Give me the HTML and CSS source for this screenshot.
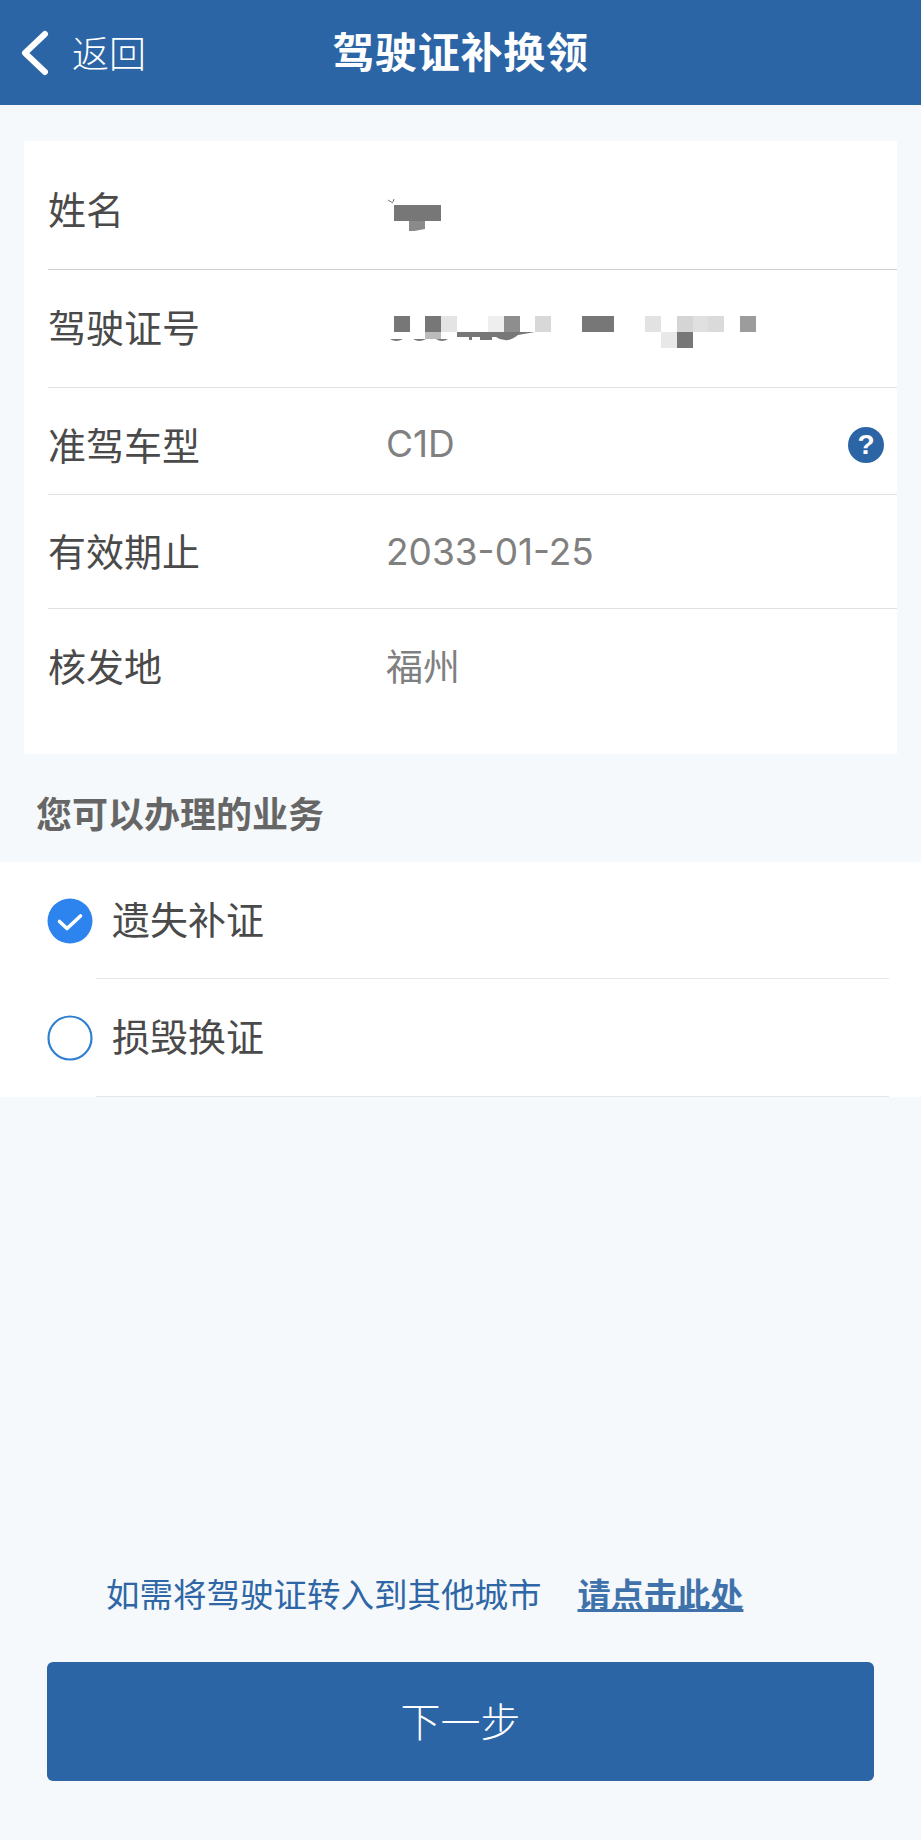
FILE: index.html
```html
<!DOCTYPE html>
<html lang="zh-CN">
<head>
<meta charset="utf-8">
<title>驾驶证补换领</title>
<link rel="stylesheet" href="styles.css">
</head>
<body>

<!-- top bar -->
<div class="topBar">
    <div class="backLink">
        <svg class="backIcon" width="30" height="46" viewBox="0 0 30 46">
            <path d="M25 4 L5 23 L25 42" fill="none" stroke="#fff" stroke-width="6" stroke-linecap="round" stroke-linejoin="round"/>
        </svg>
        <span class="backText">返回</span>
    </div>
    <div class="pageTitle">驾驶证补换领</div>
</div>

<!-- licence details -->
<div class="infoCard">
    <div class="infoRow rowName">
        <div class="infoLabel">姓名</div>
        <svg class="mosaic mosaicName" width="70" height="40" viewBox="386 191 70 40">
            <rect x="394" y="205" width="47" height="16" fill="#777"/>
            <path d="M409 221 H425 V229 L409 232 Z" fill="#8a8a8a"/>
            <path d="M388 200 L393 203 M393 202 L394 199" stroke="#777" stroke-width="1" fill="none"/>
        </svg>
    </div>
    <div class="infoRow rowNumber">
        <div class="infoLabel">驾驶证号</div>
        <svg class="mosaic mosaicNumber" width="390" height="40" viewBox="386 309 390 40">
            <rect x="394" y="315" width="16" height="16" fill="#777"/>
            <rect x="425" y="315" width="16" height="16" fill="#777"/>
            <rect x="441" y="315" width="16" height="16" fill="#e4e4e4"/>
            <rect x="488" y="315" width="16" height="16" fill="#eee"/>
            <rect x="504" y="315" width="16" height="16" fill="#8e8e8e"/>
            <rect x="535" y="315" width="16" height="16" fill="#d8d8d8"/>
            <rect x="582" y="315" width="32" height="16" fill="#777"/>
            <rect x="645" y="315" width="16" height="16" fill="#e2e2e2"/>
            <rect x="677" y="315" width="16" height="16" fill="#d5d5d5"/>
            <rect x="693" y="315" width="15" height="16" fill="#e0e0e0"/>
            <rect x="708" y="315" width="16" height="16" fill="#dadada"/>
            <rect x="740" y="315" width="16" height="16" fill="#9c9c9c"/>
            <rect x="661" y="331" width="16" height="16" fill="#e8e8e8"/>
            <rect x="677" y="331" width="16" height="16" fill="#777"/>
            <rect x="425" y="331" width="16" height="7" fill="#bbb"/>
            <path d="M457 331 H535 L518 334 Q510 340 505 339 Q500 339 496 336 H492 V339 H480 V336 H472 V339 H469 V336 H457 Z" fill="#777"/>
            <path d="M390 338 Q396 342 403 338 Z M413 338 Q419 342 426 338 Z M436 338 Q442 342 448 338 Z" fill="#777"/>
        </svg>
    </div>
    <div class="infoRow rowType">
        <div class="infoLabel">准驾车型</div>
        <div class="infoValue">C1D</div>
        <div class="helpIcon">?</div>
    </div>
    <div class="infoRow rowDate">
        <div class="infoLabel">有效期止</div>
        <div class="infoValue dateValue">2033-01-25</div>
    </div>
    <div class="infoRow rowPlace">
        <div class="infoLabel">核发地</div>
        <div class="infoValue placeValue">福州</div>
    </div>
</div>

<div class="sectionTitle">您可以办理的业务</div>

<!-- business options -->
<div class="optionList">
    <div class="optionRow">
        <svg class="optionIcon" width="46" height="46" viewBox="0 0 46 46">
            <circle cx="23" cy="23" r="22.5" fill="#2d84ee"/>
            <path d="M12.5 23.5 L20 30.5 L33.5 18" fill="none" stroke="#fff" stroke-width="3.6" stroke-linecap="round" stroke-linejoin="round"/>
        </svg>
        <div class="optionText">遗失补证</div>
    </div>
    <div class="optionRow lastOption">
        <svg class="optionIcon" width="46" height="46" viewBox="0 0 46 46">
            <circle cx="23" cy="23" r="21.5" fill="#fff" stroke="#2f80d0" stroke-width="2.2"/>
        </svg>
        <div class="optionText">损毁换证</div>
    </div>
</div>

<div class="bottomArea">
    <div class="transferLine">
        <span class="transferText">如需将驾驶证转入到其他城市</span>
        <span class="transferLink">请点击此处</span>
    </div>
    <div class="nextButton">下一步</div>
</div>

</body>
</html>
```

FILE: styles.css
```css
/* page */
html, body
{
    margin: 0;
    padding: 0;
}

body
{
    width: 921px;
    height: 1840px;
    overflow: hidden;
    display: flex;
    flex-direction: column;
    background-color: #f5f9fb;
    font-family: "Noto Sans CJK SC", "Noto Sans", sans-serif;
}

/* top bar */
.topBar
{
    height: 105px;
    flex: none;
    display: grid;
    grid-template-columns: 1fr auto 1fr;
    align-items: center;
    background-color: #2c65a6;
    color: #fff;
}

.backLink
{
    display: flex;
    align-items: center;
    padding-left: 20px;
}

.backText
{
    margin: 0 0 2px 22px;
    font-size: 37px;
    line-height: 46px;
    font-weight: 300;
}

.pageTitle
{
    margin-bottom: 6px;
    font-size: 42px;
    line-height: 50px;
    font-weight: 700;
    letter-spacing: 0.7px;
}

/* licence card */
.infoCard
{
    flex: none;
    height: 613px;
    margin: 36px 24px 0;
    background-color: #fff;
}

.infoRow
{
    display: flex;
    align-items: flex-start;
    margin-left: 24px;
    box-sizing: border-box;
    border-bottom: 1px solid #dfe1e3;
}

.rowName   { height: 129px; padding-top: 47px; border-bottom-color: #cfd1d3; }
.rowNumber { height: 118px; padding-top: 36px; }
.rowType   { height: 107px; padding-top: 36px; }
.rowDate   { height: 114px; padding-top: 35px; }
.rowPlace  { height: 145px; padding-top: 36px; border-bottom: 0; }

.infoLabel
{
    width: 338px;
    flex: none;
    font-size: 38px;
    line-height: 40px;
    color: #4a4a4a;
}

.infoValue
{
    flex: 1;
    font-family: Inter, "Noto Sans CJK SC", sans-serif;
    font-size: 37px;
    line-height: 40px;
    color: #808080;
}

.dateValue
{
    margin-top: 2px;
}

.placeValue
{
    margin-top: 3px;
}

.mosaic
{
    display: block;
    flex: none;
}

.mosaicName
{
    margin-top: 3px;
}

.mosaicNumber
{
    margin-top: 4px;
}

.helpIcon
{
    width: 36px;
    height: 36px;
    flex: none;
    margin: 3px 13px 0 0;
    border-radius: 50%;
    background-color: #2c65a6;
    color: #fff;
    font-family: "Liberation Sans", sans-serif;
    font-size: 28px;
    font-weight: 700;
    line-height: 36px;
    text-align: center;
}

/* options */
.sectionTitle
{
    flex: none;
    height: 108px;
    box-sizing: border-box;
    padding: 38px 0 0 36px;
    font-size: 36px;
    line-height: 40px;
    font-weight: 700;
    color: #666;
}

.optionList
{
    flex: none;
    height: 235px;
    background-color: #fff;
}

.optionRow
{
    position: relative;
    height: 117px;
    display: flex;
    align-items: center;
    padding-left: 47px;
    box-sizing: border-box;
}

.lastOption
{
    height: 118px;
}

.optionRow::after
{
    content: "";
    position: absolute;
    left: 96px;
    right: 32px;
    bottom: 0;
    border-bottom: 1px solid #e3e5e7;
}

.optionIcon
{
    flex: none;
    display: block;
}

.optionText
{
    margin: 0 0 6px 19px;
    font-size: 38px;
    line-height: 46px;
    color: #4a4a4a;
}

/* bottom */
.bottomArea
{
    flex: none;
    margin-top: 474px;
    padding: 0 47px;
}

.transferLine
{
    display: flex;
    align-items: center;
    height: 44px;
    padding-left: 59px;
}

.transferText
{
    font-size: 33.5px;
    line-height: 44px;
    color: #2e66a6;
}

.transferLink
{
    margin-left: 36px;
    font-size: 33.2px;
    line-height: 44px;
    font-weight: 700;
    color: #3f72ab;
    text-decoration: underline;
}

.nextButton
{
    height: 119px;
    margin-top: 47px;
    border-radius: 6px;
    background-color: #2c65a6;
    color: #fff;
    font-size: 40px;
    font-weight: 300;
    line-height: 117px;
    text-align: center;
}
```
